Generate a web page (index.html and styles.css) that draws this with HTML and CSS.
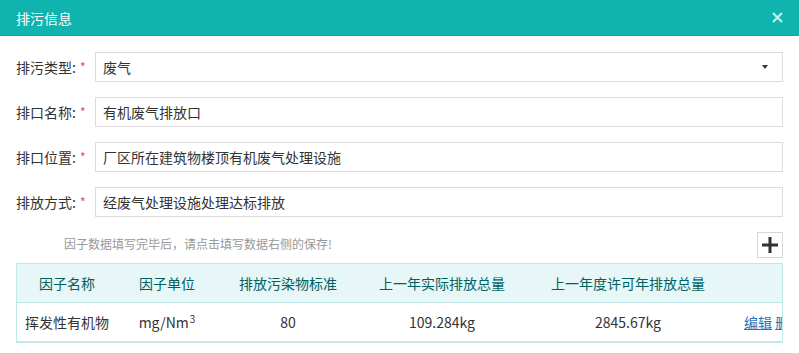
FILE: index.html
```html
<!DOCTYPE html>
<html lang="zh-CN">
<head>
    <meta charset="UTF-8">
    <title>排污信息</title>
    <link rel="stylesheet" href="styles.css">
</head>
<body>
<div class="dialog">
    <div class="dlg-head">
        <span class="dlg-title">排污信息</span>
        <span class="dlg-close">
            <svg width="11" height="11" viewBox="0 0 11 11"><path d="M1 1L10 10M10 1L1 10" stroke="#c4efec" stroke-width="2.2"/></svg>
        </span>
    </div>
    <div class="dlg-body">
        <div class="form">
            <div class="row">
                <label class="lab">排污类型:<i>*</i></label>
                <div class="ipt select">废气<span class="caret"></span></div>
            </div>
            <div class="row">
                <label class="lab">排口名称:<i>*</i></label>
                <div class="ipt">有机废气排放口</div>
            </div>
            <div class="row">
                <label class="lab">排口位置:<i>*</i></label>
                <div class="ipt">厂区所在建筑物楼顶有机废气处理设施</div>
            </div>
            <div class="row">
                <label class="lab">排放方式:<i>*</i></label>
                <div class="ipt">经废气处理设施处理达标排放</div>
            </div>
        </div>
        <div class="tip-bar">
            <p class="tip">因子数据填写完毕后，请点击填写数据右侧的保存!</p>
            <span class="add">
                <svg width="16" height="16" viewBox="0 0 16 16"><path d="M0 6.5h16v3H0zM6.5 0h3v16h-3z" fill="#333"/></svg>
            </span>
        </div>
        <div class="tbl-wrap">
            <table class="tbl">
                <colgroup>
                    <col style="width:100px">
                    <col style="width:100px">
                    <col style="width:142px">
                    <col style="width:166px">
                    <col style="width:206px">
                    <col style="width:90px">
                </colgroup>
                <thead>
                    <tr>
                        <th>因子名称</th>
                        <th>因子单位</th>
                        <th>排放污染物标准</th>
                        <th>上一年实际排放总量</th>
                        <th>上一年度许可年排放总量</th>
                        <th></th>
                    </tr>
                </thead>
                <tbody>
                    <tr>
                        <td>挥发性有机物</td>
                        <td>mg/Nm<sup>3</sup></td>
                        <td>80</td>
                        <td>109.284kg</td>
                        <td>2845.67kg</td>
                        <td class="ops"><a href="#">编辑</a> <a href="#">删除</a></td>
                    </tr>
                </tbody>
            </table>
        </div>
    </div>
</div>
</body>
</html>
```

FILE: styles.css
```css
*{margin:0;padding:0;box-sizing:border-box;}
body{
    font-family: "Noto Sans CJK SC","Liberation Sans",sans-serif;
    font-size: 14px;
    color: #333;
    background: #fff;
}
.dialog{
    width: 799px;
    height: 353px;
    overflow: hidden;
}
.dlg-head{
    display: flex;
    align-items: center;
    justify-content: space-between;
    height: 36px;
    padding: 0 16px;
    background: #10b3ae;
    border-bottom: 1px solid #0fa8a3;
}
.dlg-title{
    color: #fff;
    font-size: 14px;
}
.dlg-close{
    display: flex;
    width: 11px;
    height: 11px;
    margin-right: 0;
}
.dlg-body{
    padding: 16px 16px 0;
}
.form{
    display: flex;
    flex-direction: column;
    gap: 15px;
}
.row{
    display: flex;
    align-items: center;
}
.lab{
    width: 79px;
    flex: none;
    white-space: nowrap;
}
.lab i{
    font-style: normal;
    color: #e84a4a;
    font-size: 12px;
    margin-left: 4px;
    position: relative;
    top: -1px;
}
.ipt{
    flex: 1;
    display: flex;
    align-items: center;
    height: 30px;
    padding: 0 7px;
    border: 1px solid #dcdcdc;
    background: #fff;
}
.select{
    justify-content: space-between;
}
.caret{
    width: 0;
    height: 0;
    margin-right: 7px;
    border-left: 3px solid transparent;
    border-right: 3px solid transparent;
    border-top: 4px solid #333;
}
.tip-bar{
    display: flex;
    align-items: center;
    justify-content: space-between;
    height: 26px;
    margin-top: 15px;
    padding-left: 48px;
}
.tip{
    font-size: 12px;
    color: #999;
    margin-top: -4px;
}
.add{
    display: flex;
    align-items: center;
    justify-content: center;
    width: 26px;
    height: 26px;
    border: 1px solid #d8d8d8;
}
.tbl-wrap{
    margin-top: 5px;
    border: 1px solid #bfe8e8;
    border-bottom-width: 2px;
    overflow: hidden;
}
.tbl{
    width: 804px;
    border-collapse: collapse;
    table-layout: fixed;
}
.tbl th{
    height: 38px;
    font-weight: normal;
    color: #03605e;
    background: #e7f6f6;
    border-bottom: 1px solid #bfe8e8;
    text-align: center;
    white-space: nowrap;
}
.tbl td{
    height: 39px;
    text-align: center;
    white-space: nowrap;
}
.tbl sup{
    font-size: 10px;
    vertical-align: 5px;
    line-height: 0;
    margin-left: 1px;
}
.tbl td.ops{
    text-align: left;
    padding-left: 13px;
}
.ops a{
    color: #2b72b5;
    text-decoration: underline;
}
```
